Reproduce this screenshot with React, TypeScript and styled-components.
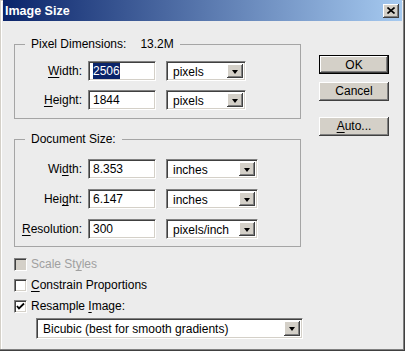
import React from 'react';
import styled, { createGlobalStyle } from 'styled-components';

//<editor-fold desc="Styles">
const GlobalStyle = createGlobalStyle`
  html, body {
    margin: 0;
    padding: 0;
    background: #ececec;
  }
  body {
    font-family: "Liberation Sans", Arial, sans-serif;
    font-size: 12px;
    color: #000;
  }
`;

const Window = styled.div`
  box-sizing: border-box;
  width: 405px;
  height: 351px;
  padding: 0 3px 3px 3px;
  background: #ececec;
  box-shadow: inset -1px -1px #404040, inset -2px -2px #808080, inset 1px 1px #d4d0c8, inset 2px 2px #fff;
  display: flex;
  flex-direction: column;
`;

const TitleBar = styled.div`
  height: 21px;
  display: flex;
  align-items: center;
  justify-content: space-between;
  padding: 0 3px 0 2px;
  background: linear-gradient(to right, #0a246a, #a6caf0);
`;

const Title = styled.span`
  color: #fff;
  font-weight: 700;
  font-size: 12.5px;
  line-height: 14px;
`;

const CloseButton = styled.div`
  box-sizing: border-box;
  width: 16px;
  height: 14px;
  background: #d4d0c8;
  box-shadow: inset -1px -1px #404040, inset 1px 1px #fff, inset -2px -2px #808080;
  display: flex;
  align-items: center;
  justify-content: center;
`;

const Body = styled.div`
  display: flex;
  padding: 16px 0 0 11px;
`;

const LeftColumn = styled.div`
  width: 287px;
  display: flex;
  flex-direction: column;
`;

const RightColumn = styled.div`
  width: 70px;
  margin-left: 18px;
  padding-top: 18px;
  display: flex;
  flex-direction: column;
`;

const Group = styled.fieldset<{ $top: number; $pt: number; $pb: number }>`
  margin: ${props => props.$top}px 0 0 0;
  padding: ${props => props.$pt}px 0 ${props => props.$pb}px 0;
  border: 1px solid #a5a5a5;
  min-width: 0;
`;

const Legend = styled.legend`
  margin-left: 10px;
  padding: 0 6px;
  line-height: 14px;
`;

const Extra = styled.span`
  margin-left: 14px;
`;

const FieldGrid = styled.div<{ $gap: number; $select: number }>`
  display: grid;
  grid-template-columns: 67px 68px ${props => props.$select}px;
  grid-auto-rows: 20px;
  column-gap: 6px;
  row-gap: ${props => props.$gap}px;
  & > :nth-child(3n) {
    margin-left: 4px;
  }
`;

const FieldLabel = styled.div`
  text-align: right;
  line-height: 20px;
  white-space: nowrap;
`;

const Sunken = styled.div`
  box-sizing: border-box;
  background: #fff;
  border-top: 1px solid #808080;
  border-left: 1px solid #808080;
  border-bottom: 1px solid #fff;
  border-right: 1px solid #fff;
  box-shadow: inset 1px 1px #404040, inset -1px -1px #d4d0c8;
`;

const TextBox = styled(Sunken)`
  height: 20px;
  padding: 0 4px;
  line-height: 18px;
  white-space: nowrap;
`;

const Selected = styled.span`
  background: #0a246a;
  color: #fff;
  padding: 1px 0;
`;

const Select = styled(Sunken)<{ $width?: number }>`
  height: ${props => (props.$width ? 21 : 20)}px;
  width: ${props => (props.$width ? `${props.$width}px` : 'auto')};
  display: flex;
  align-items: stretch;
  padding: 2px;
`;

const SelectText = styled.div`
  flex: 1;
  padding-left: 4px;
  line-height: 16px;
  white-space: nowrap;
`;

const DropButton = styled.div`
  width: 16px;
  background: #d4d0c8;
  box-shadow: inset -1px -1px #404040, inset 1px 1px #fff, inset -2px -2px #808080;
  display: flex;
  align-items: center;
  justify-content: center;
`;

const Arrow = styled.div`
  width: 0;
  height: 0;
  border-left: 3.5px solid transparent;
  border-right: 3.5px solid transparent;
  border-top: 4px solid #000;
  margin-top: 1px;
`;

const CheckList = styled.div`
  margin-top: 10px;
  display: flex;
  flex-direction: column;
  gap: 7px;
`;

const CheckRow = styled.div<{ $disabled?: boolean }>`
  display: flex;
  align-items: center;
  height: 14px;
  gap: 4px;
  color: ${props => (props.$disabled ? '#a0a0a0' : '#000')};
`;

const Box = styled(Sunken)<{ $disabled?: boolean }>`
  width: 13px;
  height: 13px;
  background: ${props => (props.$disabled ? '#d4d0c8' : '#fff')};
  display: flex;
  align-items: center;
  justify-content: center;
`;

const MethodRow = styled.div`
  margin: 5px 0 0 22px;
`;

const DialogButton = styled.div<{ $default?: boolean; $gap: number }>`
  box-sizing: border-box;
  height: 19px;
  margin-top: ${props => props.$gap}px;
  background: #d4d0c8;
  text-align: center;
  line-height: 18px;
  border: ${props => (props.$default ? '1px solid #000' : 'none')};
  box-shadow: inset -1px -1px #404040, inset 1px 1px #fff, inset -2px -2px #808080;
`;

const Key = styled.u`
  text-decoration-thickness: 1px;
  text-underline-offset: 2px;
`;
//</editor-fold>

const Dropdown = ({ value, width }: { value: string; width?: number }) => (
  <Select $width={width}>
    <SelectText>{value}</SelectText>
    <DropButton>
      <Arrow />
    </DropButton>
  </Select>
);

const Check = ({ checked, disabled }: { checked?: boolean; disabled?: boolean }) => (
  <Box $disabled={disabled}>
    {checked && (
      <svg width="9" height="9" viewBox="0 0 9 9">
        <path d="M1 4 L3 6.5 L8 1.5" stroke="#000" strokeWidth="1.8" fill="none" />
      </svg>
    )}
  </Box>
);

export default function App() {
  return (
    <>
      <GlobalStyle />
      <Window>
        <TitleBar>
          <Title>Image Size</Title>
          <CloseButton>
            <svg width="8" height="7" viewBox="0 0 8 7">
              <path d="M0.5 0.5 L7.5 6.5 M7.5 0.5 L0.5 6.5" stroke="#000" strokeWidth="1.6" />
            </svg>
          </CloseButton>
        </TitleBar>
        <Body>
          <LeftColumn>
            <Group $top={0} $pt={10} $pb={8}>
              <Legend>
                Pixel Dimensions:<Extra>13.2M</Extra>
              </Legend>
              <FieldGrid $gap={9} $select={84}>
                <FieldLabel><Key>W</Key>idth:</FieldLabel>
                <TextBox><Selected>2506</Selected></TextBox>
                <Dropdown value="pixels" />
                <FieldLabel><Key>H</Key>eight:</FieldLabel>
                <TextBox>1844</TextBox>
                <Dropdown value="pixels" />
              </FieldGrid>
            </Group>
            <Group $top={13} $pt={13} $pb={7}>
              <Legend>Document Size:</Legend>
              <FieldGrid $gap={10} $select={96}>
                <FieldLabel>Wi<Key>d</Key>th:</FieldLabel>
                <TextBox>8.353</TextBox>
                <Dropdown value="inches" />
                <FieldLabel>Hei<Key>g</Key>ht:</FieldLabel>
                <TextBox>6.147</TextBox>
                <Dropdown value="inches" />
                <FieldLabel><Key>R</Key>esolution:</FieldLabel>
                <TextBox>300</TextBox>
                <Dropdown value="pixels/inch" />
              </FieldGrid>
            </Group>
            <CheckList>
              <CheckRow $disabled>
                <Check disabled />
                <span>Scale St<Key>y</Key>les</span>
              </CheckRow>
              <CheckRow>
                <Check />
                <span><Key>C</Key>onstrain Proportions</span>
              </CheckRow>
              <CheckRow>
                <Check checked />
                <span>Resample <Key>I</Key>mage:</span>
              </CheckRow>
            </CheckList>
            <MethodRow>
              <Dropdown value="Bicubic (best for smooth gradients)" width={267} />
            </MethodRow>
          </LeftColumn>
          <RightColumn>
            <DialogButton $default $gap={0}>OK</DialogButton>
            <DialogButton $gap={8}>Cancel</DialogButton>
            <DialogButton $gap={16}><Key>A</Key>uto...</DialogButton>
          </RightColumn>
        </Body>
      </Window>
    </>
  );
}
